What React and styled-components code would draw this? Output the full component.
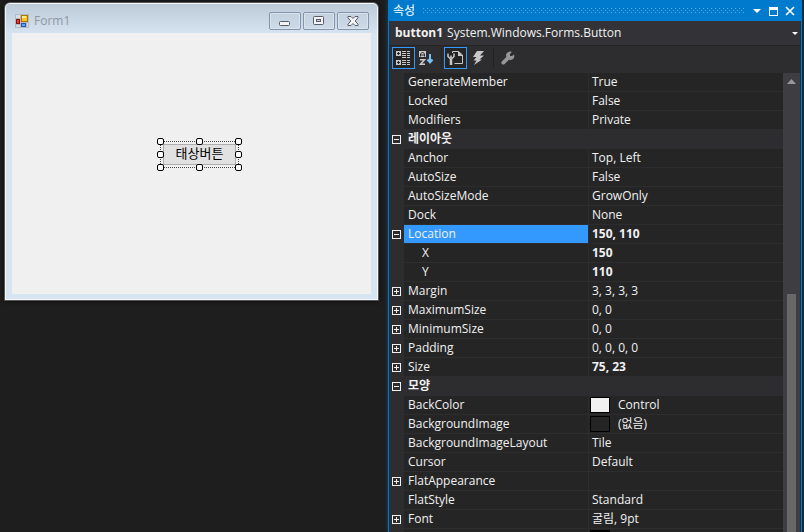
import React from "react";
import styled, { createGlobalStyle } from "styled-components";

const GlobalStyle = createGlobalStyle`
  *, *::before, *::after { box-sizing: border-box; }
  body {
    margin: 0;
    background: #1e1e1e;
    color: #f1f1f1;
    font: 12px/18px "Open Sans", "Noto Sans CJK KR", sans-serif;
  }
  button, select { font: inherit; color: inherit; }
`;

const Page = styled.div`
  display: flex;
  height: 100vh;
  overflow: hidden;
`;

/* ---------- designer ---------- */

const Designer = styled.main`
  flex: 1;
  min-width: 0;
  padding: 2px 9px 0 4px;
`;

const FormWindow = styled.section`
  display: flex;
  flex-direction: column;
  padding: 0 7px 6px;
  border: 1px solid #59595c;
  border-radius: 6px 6px 0 0;
  background: linear-gradient(#bccad8, #d7e4f1 32px);
  box-shadow: inset 0 0 0 1px #f4f7fa, 0 0 4px #0a0a0a;
`;

const FormTitleBar = styled.header`
  display: flex;
  align-items: center;
  gap: 5px;
  height: 30px;
  padding: 6px 2px 0 3px;
  color: #9097a0;
`;

const FormTitle = styled.h1`
  flex: 1;
  margin: 0;
  font-size: 12px;
  font-weight: 400;
`;

const CaptionButtons = styled.div`
  display: flex;
  gap: 2px;
`;

const CaptionButton = styled.button`
  display: flex;
  align-items: center;
  justify-content: center;
  width: 32px;
  height: 18px;
  padding: 0;
  border: 1px solid #8593ad;
  border-radius: 2px;
  background: linear-gradient(#c3d0de, #cddae7);
  box-shadow: inset 0 0 0 1px #d9e4ef;
`;

const FormClient = styled.div`
  position: relative;
  height: 261px;
  background: #f0f0f0;
`;

const PlacedControl = styled.div`
  position: absolute;
  left: 150px;
  top: 110px;
  width: 75px;
  height: 23px;
  padding: 1px;
`;

const FormButton = styled.button`
  display: block;
  width: 100%;
  height: 100%;
  padding: 0 0 3px;
  border: 1px solid #adadad;
  background: #e1e1e1;
  color: #000;
  font: 13px/16px "Noto Sans CJK KR", sans-serif;
`;

const SelectionFrame = styled.div`
  position: absolute;
  inset: -2px;
  border: 1px dotted #444;
  pointer-events: none;
`;

const HandleLayer = styled.div`
  position: absolute;
  inset: -5px;
  display: grid;
  grid-template-columns: repeat(3, 7px);
  grid-template-rows: repeat(3, 7px);
  place-content: space-between;
`;

const Handle = styled.span`
  grid-column: ${(p) => p.$col};
  grid-row: ${(p) => p.$row};
  border: 1px solid #000;
  border-radius: 2px;
  background: #fff;
`;

/* ---------- property panel ---------- */

const Panel = styled.aside`
  display: flex;
  flex-direction: column;
  flex: 0 0 414px;
  margin-right: 2px;
  border: solid #007acc;
  border-width: 0 1px;
  background: #2d2d30;
  box-shadow: 0 0 4px #0a4d7d;
`;

const PanelTitleBar = styled.header`
  display: flex;
  align-items: center;
  gap: 8px;
  flex: none;
  height: 21px;
  padding: 0 6px 0 4px;
  background: #007acc;
`;

const PanelTitle = styled.h2`
  margin: 0;
  font-size: 12px;
  font-weight: 400;
  color: #fff;
`;

const Grip = styled.div`
  flex: 1;
  height: 5px;
  background:
    conic-gradient(at 1px 1px, transparent 75%, #59a9df 0) 0 0 / 4px 4px,
    conic-gradient(at 1px 1px, transparent 75%, #59a9df 0) 2px 2px / 4px 4px;
`;

const PanelActions = styled.div`
  display: flex;
  gap: 6px;
`;

const GlyphButton = styled.button`
  display: flex;
  align-items: center;
  width: 10px;
  height: 10px;
  padding: 0;
  border: 0;
  background: none;
`;

const ObjectBar = styled.div`
  display: flex;
  align-items: center;
  gap: 4px;
  flex: none;
  height: 24px;
  margin-right: 1px;
  padding: 0 2px 0 6px;
  background: #333337;
`;

const ObjectName = styled.label`
  font-weight: 700;
`;

const ObjectSelect = styled.select`
  appearance: none;
  flex: 1;
  min-width: 0;
  height: 22px;
  padding: 0;
  border: 0;
  background: transparent;
  outline: 0;
`;

const Toolbar = styled.div`
  display: flex;
  align-items: center;
  flex: none;
  height: 28px;
  padding: 0 3px 3px;
  border-top: 1px solid #252526;
`;

const ToolButton = styled.button`
  display: flex;
  align-items: center;
  justify-content: center;
  width: 23px;
  height: 22px;
  padding: 0;
  border: 1px solid ${(p) => (p.$active ? "#3399ff" : "transparent")};
  background: ${(p) => (p.$active ? "#252526" : "none")};
`;

const Separator = styled.span`
  width: 1px;
  height: 20px;
  margin: 0 2px 0 3px;
  background: #222224;
`;

const GridArea = styled.div`
  display: flex;
  flex: 1;
  min-height: 0;
  overflow: hidden;
  margin-right: 1px;
`;

const GridClip = styled.div`
  flex: 1;
  min-width: 0;
  overflow: hidden;
`;

const PropertyTable = styled.table`
  width: 100%;
  table-layout: fixed;
  border-collapse: separate;
  border-spacing: 0;
`;

const Cell = styled.td`
  height: 19px;
  padding: 0 0 0 3px;
  border-bottom: 1px solid #2d2d30;
  background: #252526;
  font-weight: ${(p) => (p.$bold ? 700 : 400)};
  white-space: nowrap;
`;

const GutterCell = styled(Cell)`
  background: #2d2d30;
`;

const NameCell = styled(Cell).attrs({ as: "th", scope: "row" })`
  padding-left: ${(p) => (p.$nested ? 18 : 4)}px;
  border-right: 1px solid #2d2d30;
  background: ${(p) => (p.$selected ? "#3399ff" : "#252526")};
  background-clip: padding-box;
  text-align: left;
`;

const CategoryCell = styled(GutterCell).attrs({ as: "th", colSpan: 2 })`
  padding-left: 4px;
  font-weight: 700;
  text-align: left;
`;

const ValueLine = styled.div`
  display: flex;
  align-items: center;
  height: 18px;
`;

const Swatch = styled.span`
  width: 20px;
  height: 16px;
  margin: 0 8px 0 -2px;
  border: 1px solid #000;
  background: ${(p) => p.$color};
`;

const Expander = styled.button`
  display: block;
  width: 9px;
  height: 9px;
  padding: 0;
  border: 0;
  background: none;
  line-height: 0;
`;

const ScrollTrack = styled.div`
  display: flex;
  flex-direction: column;
  align-items: center;
  width: 17px;
  background: #3e3e42;
`;

const ScrollArrow = styled.button`
  flex: none;
  width: 17px;
  height: 17px;
  padding: 0;
  border: 0;
  background: none;
  line-height: 0;
`;

const ScrollThumb = styled.div`
  flex: 1;
  width: 9px;
  margin-top: 204px;
  background: #686868;
`;

const Svg = ({ w, h, children }) => (
  <svg width={w} height={h} viewBox={`0 0 ${w} ${h}`} aria-hidden="true" fill="none">
    {children}
  </svg>
);

const FormIcon = () => (
  <Svg w={14} h={14}>
    <g shapeRendering="crispEdges">
      <path d="M0 0h14v14H0z" fill="#b4b9be" />
      <path d="M1 1h4v3H1zM1 11h4v2H1zM12 9h1v4h-1z" fill="#d8dee4" />
      <path d="M6 1h7v7H6z" fill="#a8780c" />
      <path d="M7 2h5v5H7z" fill="#f6c21c" />
      <path d="M7 2h4v2H7z" fill="#ffe98a" />
      <path d="M1 5h4v5H1z" fill="#8c1410" />
      <path d="M2 6h2v3H2z" fill="#d8413a" />
      <path d="M6 9h5v4H6z" fill="#2458b8" />
      <path d="M7 10h3v2H7z" fill="#6ba0f0" />
    </g>
  </Svg>
);

const MinimizeIcon = () => (
  <Svg w={12} h={12}>
    <rect x="0.5" y="6.5" width="10" height="4" rx="1" fill="#f4f4f4" stroke="#565b6a" />
  </Svg>
);

const MaximizeIcon = () => (
  <Svg w={12} h={10}>
    <rect x="0.5" y="0.5" width="10" height="8" rx="1" fill="#f4f4f4" stroke="#565b6a" />
    <rect x="3.5" y="3.5" width="4" height="2" fill="#c3d0de" stroke="#565b6a" />
  </Svg>
);

const CloseIcon = () => (
  <Svg w={12} h={10}>
    <path
      d="M1 .5h3L6 2.500 8 .5h3v1.300L8.200 5 11 8.200v1.300H8L6 7.500 4 9.500H1V8.200L3.800 5 1 1.800z"
      fill="#f4f4f4"
      stroke="#565b6a"
    />
  </Svg>
);

const CategorizedIcon = () => (
  <Svg w={15} h={16}>
    <g shapeRendering="crispEdges" fill="#c8c8c8">
      <path d="M0 1h5v5H0zM0 10h5v5H0z" />
      <path d="M6 1h4v1H6zM11 1h3v1h-3zM6 3h4v1H6zM11 3h3v1h-3zM6 5h4v1H6zM11 5h3v1h-3zM6 7h4v1H6zM11 7h3v1h-3zM6 10h4v1H6zM11 10h3v1h-3zM6 12h4v1H6zM11 12h3v1h-3zM6 14h4v1H6zM11 14h3v1h-3z" />
      <path d="M2 2h1v3H2zM1 3h3v1H1zM2 11h1v3H2zM1 12h3v1H1z" fill="#252526" />
    </g>
  </Svg>
);

const AlphabeticalIcon = () => (
  <Svg w={15} h={16}>
    <path d="M0 1h7v6H0z" fill="#c8c8c8" />
    <path d="M1.500 6.500V4L3.500 2l2 2v2.500M2 5h3" stroke="#2d2d30" />
    <path d="M1 9.800h4.500L1.500 14.200H6" stroke="#c8c8c8" strokeWidth="1.600" />
    <path d="M11 4v8M8.500 9.500l2.500 3 2.500-3" stroke="#75c4f5" strokeWidth="2" />
  </Svg>
);

const PropertiesIcon = () => (
  <Svg w={17} h={16}>
    <path d="M5.500 3V1.500h6L15.500 5v8.500H7.500" stroke="#c8c8c8" />
    <path d="M11 1v5h5z" fill="#c8c8c8" />
    <path d="M1 3.500v3L3.500 9v6M7 3.500v3L4.500 9v6M4 8V5.500" stroke="#c8c8c8" strokeWidth="1.500" />
  </Svg>
);

const EventsIcon = () => (
  <Svg w={13} h={16}>
    <path d="M5 1h7L8 5.500h4L7.500 9.500h2.500L2 15l2.500-4.500H1.500L4.500 7H1z" fill="#c8c8c8" />
  </Svg>
);

const WrenchIcon = () => (
  <Svg w={14} h={14}>
    <path
      d="M6 2C7.300.6 9.200.2 10.800.9L9 3v2h2l2-1.600c.6 1.700.2 3.500-1 4.600-1.200 1-2.600 1.200-4 .8L3.700 13c-.8.8-2.100.8-2.800.1s-.7-2 .1-2.800L5.300 6C4.800 4.500 5 3 6 2z"
      fill="#969696"
    />
  </Svg>
);

const CaretIcon = ({ w = 8 }) => (
  <Svg w={w} h={w / 2}>
    <path d={`M0 0h${w}L${w / 2} ${w / 2}z`} fill="#fff" />
  </Svg>
);

const ExpandIcon = ({ open }) => (
  <Svg w={9} h={9}>
    <g stroke="#f1f1f1" shapeRendering="crispEdges">
      <path d="M.5 .5h8v8h-8z" />
      <path d={open ? "M2 4.500h5" : "M2 4.500h5M4.500 2v5"} />
    </g>
  </Svg>
);

const ROWS = [
  { name: "GenerateMember", value: "True" },
  { name: "Locked", value: "False" },
  { name: "Modifiers", value: "Private" },
  { category: "레이아웃" },
  { name: "Anchor", value: "Top, Left" },
  { name: "AutoSize", value: "False" },
  { name: "AutoSizeMode", value: "GrowOnly" },
  { name: "Dock", value: "None" },
  { name: "Location", value: "150, 110", bold: true, open: true, selected: true },
  { name: "X", value: "150", bold: true, nested: true },
  { name: "Y", value: "110", bold: true, nested: true },
  { name: "Margin", value: "3, 3, 3, 3", open: false },
  { name: "MaximumSize", value: "0, 0", open: false },
  { name: "MinimumSize", value: "0, 0", open: false },
  { name: "Padding", value: "0, 0, 0, 0", open: false },
  { name: "Size", value: "75, 23", bold: true, open: false },
  { category: "모양" },
  { name: "BackColor", value: "Control", swatch: "#f0f0f0" },
  { name: "BackgroundImage", value: "(없음)", swatch: "#252526" },
  { name: "BackgroundImageLayout", value: "Tile" },
  { name: "Cursor", value: "Default" },
  { name: "FlatAppearance", value: "", open: false },
  { name: "FlatStyle", value: "Standard" },
  { name: "Font", value: "굴림, 9pt", open: false },
  { name: "", value: "", swatch: "#000" },
];

/* [column, row] of each resize handle */
const HANDLES = [
  [1, 1], [2, 1], [3, 1],
  [1, 2], [3, 2],
  [1, 3], [2, 3], [3, 3],
];

function PropertyRow({ row }) {
  const label = row.category || row.name;
  const expandable = row.category !== undefined || row.open !== undefined;
  const open = row.category ? true : row.open;
  return (
    <tr>
      <GutterCell>
        {expandable && (
          <Expander aria-label={label} aria-expanded={open}>
            <ExpandIcon open={open} />
          </Expander>
        )}
      </GutterCell>
      {row.category ? (
        <CategoryCell>{row.category}</CategoryCell>
      ) : (
        <>
          <NameCell $nested={row.nested} $selected={row.selected}>{row.name}</NameCell>
          <Cell $bold={row.bold}>
            <ValueLine>
              {row.swatch && <Swatch $color={row.swatch} />}
              {row.value}
            </ValueLine>
          </Cell>
        </>
      )}
    </tr>
  );
}

export default function App() {
  return (
    <Page>
      <GlobalStyle />
      <Designer>
        <FormWindow>
          <FormTitleBar>
            <FormIcon />
            <FormTitle>Form1</FormTitle>
            <CaptionButtons>
              <CaptionButton aria-label="Minimize"><MinimizeIcon /></CaptionButton>
              <CaptionButton aria-label="Maximize"><MaximizeIcon /></CaptionButton>
              <CaptionButton aria-label="Close"><CloseIcon /></CaptionButton>
            </CaptionButtons>
          </FormTitleBar>
          <FormClient>
            <PlacedControl>
              <FormButton>태상버튼</FormButton>
              <SelectionFrame />
              <HandleLayer>
                {HANDLES.map(([col, row]) => (
                  <Handle key={`${col}-${row}`} $col={col} $row={row} />
                ))}
              </HandleLayer>
            </PlacedControl>
          </FormClient>
        </FormWindow>
      </Designer>

      <Panel>
        <PanelTitleBar>
          <PanelTitle>속성</PanelTitle>
          <Grip />
          <PanelActions>
            <GlyphButton aria-label="Window position"><CaretIcon /></GlyphButton>
            <GlyphButton aria-label="Maximize">
              <Svg w={10} h={10}>
                <path d="M0 1h9v9H0zM1 4v5h7V4z" fill="#fff" fillRule="evenodd" shapeRendering="crispEdges" />
              </Svg>
            </GlyphButton>
            <GlyphButton aria-label="Close">
              <Svg w={10} h={10}>
                <path d="M1 1l8 8M9 1l-8 8" stroke="#fff" strokeWidth="1.600" />
              </Svg>
            </GlyphButton>
          </PanelActions>
        </PanelTitleBar>

        <ObjectBar>
          <ObjectName htmlFor="object">button1</ObjectName>
          <ObjectSelect id="object">
            <option>System.Windows.Forms.Button</option>
          </ObjectSelect>
          <CaretIcon w={6} />
        </ObjectBar>

        <Toolbar role="toolbar">
          <ToolButton $active aria-label="Categorized"><CategorizedIcon /></ToolButton>
          <ToolButton aria-label="Alphabetical"><AlphabeticalIcon /></ToolButton>
          <Separator />
          <ToolButton $active aria-label="Properties"><PropertiesIcon /></ToolButton>
          <ToolButton aria-label="Events"><EventsIcon /></ToolButton>
          <Separator />
          <ToolButton aria-label="Property pages" disabled><WrenchIcon /></ToolButton>
        </Toolbar>

        <GridArea>
          <GridClip>
            <PropertyTable>
              <colgroup>
                <col width="15" />
                <col width="185" />
                <col />
              </colgroup>
              <tbody>
                {ROWS.map((row, i) => (
                  <PropertyRow key={i} row={row} />
                ))}
              </tbody>
            </PropertyTable>
          </GridClip>
          <ScrollTrack>
            <ScrollArrow aria-label="Scroll up">
              <Svg w={9} h={5}>
                <path d="M0 5h9L4.500 0z" fill="#999" />
              </Svg>
            </ScrollArrow>
            <ScrollThumb />
          </ScrollTrack>
        </GridArea>
      </Panel>
    </Page>
  );
}
